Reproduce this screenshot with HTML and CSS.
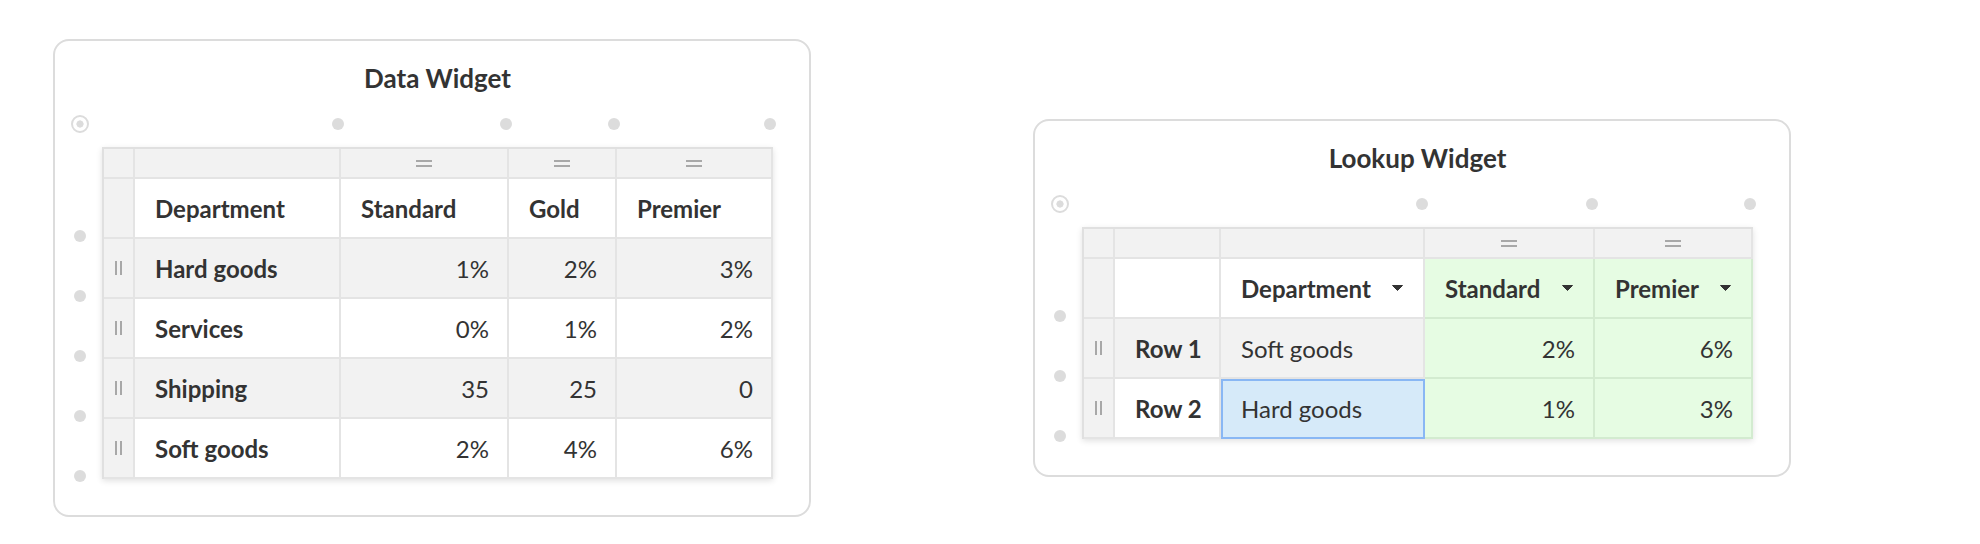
FILE: index.html
```html
<!DOCTYPE html>
<html>
<head>
<meta charset="utf-8">
<title>Widgets</title>
<link rel="stylesheet" href="styles.css">
</head>
<body>
<div class="page">
  <section class="card card-data">
    <h2 class="title">Data Widget</h2>
    <div class="board">
      <div class="corner"><span class="ring"></span></div>
      <div class="col-dots cols-data">
        <div></div>
        <div><span class="dot"></span></div>
        <div><span class="dot"></span></div>
        <div><span class="dot"></span></div>
        <div><span class="dot"></span></div>
      </div>
      <div class="row-dots rows-data">
        <div></div>
        <div><span class="dot"></span></div>
        <div><span class="dot"></span></div>
        <div><span class="dot"></span></div>
        <div><span class="dot"></span></div>
        <div><span class="dot"></span></div>
      </div>
      <div class="table data">
        <div class="c hd"></div>
        <div class="c hd"></div>
        <div class="c hd"><svg class="eq" width="16" height="7" viewBox="0 0 16 7"><path d="M0 1h16M0 6h16" stroke="#a8a8a8" stroke-width="2"/></svg></div>
        <div class="c hd"><svg class="eq" width="16" height="7" viewBox="0 0 16 7"><path d="M0 1h16M0 6h16" stroke="#a8a8a8" stroke-width="2"/></svg></div>
        <div class="c hd"><svg class="eq" width="16" height="7" viewBox="0 0 16 7"><path d="M0 1h16M0 6h16" stroke="#a8a8a8" stroke-width="2"/></svg></div>

        <div class="c handle"></div>
        <div class="c b">Department</div>
        <div class="c b">Standard</div>
        <div class="c b">Gold</div>
        <div class="c b">Premier</div>

        <div class="c handle"><svg width="7" height="14" viewBox="0 0 7 14"><path d="M1 0v14M6 0v14" stroke="#a8a8a8" stroke-width="2"/></svg></div>
        <div class="c b gray">Hard goods</div>
        <div class="c num gray">1%</div>
        <div class="c num gray">2%</div>
        <div class="c num gray">3%</div>

        <div class="c handle"><svg width="7" height="14" viewBox="0 0 7 14"><path d="M1 0v14M6 0v14" stroke="#a8a8a8" stroke-width="2"/></svg></div>
        <div class="c b">Services</div>
        <div class="c num">0%</div>
        <div class="c num">1%</div>
        <div class="c num">2%</div>

        <div class="c handle"><svg width="7" height="14" viewBox="0 0 7 14"><path d="M1 0v14M6 0v14" stroke="#a8a8a8" stroke-width="2"/></svg></div>
        <div class="c b gray">Shipping</div>
        <div class="c num gray">35</div>
        <div class="c num gray">25</div>
        <div class="c num gray">0</div>

        <div class="c handle"><svg width="7" height="14" viewBox="0 0 7 14"><path d="M1 0v14M6 0v14" stroke="#a8a8a8" stroke-width="2"/></svg></div>
        <div class="c b">Soft goods</div>
        <div class="c num">2%</div>
        <div class="c num">4%</div>
        <div class="c num">6%</div>
      </div>
    </div>
  </section>

  <section class="card card-lookup">
    <h2 class="title">Lookup Widget</h2>
    <div class="board">
      <div class="corner"><span class="ring"></span></div>
      <div class="col-dots cols-lookup">
        <div></div>
        <div></div>
        <div><span class="dot"></span></div>
        <div><span class="dot"></span></div>
        <div><span class="dot"></span></div>
      </div>
      <div class="row-dots rows-lookup">
        <div></div>
        <div><span class="dot"></span></div>
        <div><span class="dot"></span></div>
        <div><span class="dot"></span></div>
      </div>
      <div class="table lookup">
        <div class="c hd"></div>
        <div class="c hd"></div>
        <div class="c hd"></div>
        <div class="c hd"><svg class="eq" width="16" height="7" viewBox="0 0 16 7"><path d="M0 1h16M0 6h16" stroke="#a8a8a8" stroke-width="2"/></svg></div>
        <div class="c hd"><svg class="eq" width="16" height="7" viewBox="0 0 16 7"><path d="M0 1h16M0 6h16" stroke="#a8a8a8" stroke-width="2"/></svg></div>

        <div class="c handle"></div>
        <div class="c"></div>
        <div class="c b drop"><span>Department</span><svg width="11" height="6" viewBox="0 0 11 6"><path d="M0.5 0.5h10L5.5 5.5z" fill="#333" stroke="#333" stroke-width="1" stroke-linejoin="round"/></svg></div>
        <div class="c b drop green"><span>Standard</span><svg width="11" height="6" viewBox="0 0 11 6"><path d="M0.5 0.5h10L5.5 5.5z" fill="#333" stroke="#333" stroke-width="1" stroke-linejoin="round"/></svg></div>
        <div class="c b drop green"><span>Premier</span><svg width="11" height="6" viewBox="0 0 11 6"><path d="M0.5 0.5h10L5.5 5.5z" fill="#333" stroke="#333" stroke-width="1" stroke-linejoin="round"/></svg></div>

        <div class="c handle"><svg width="7" height="14" viewBox="0 0 7 14"><path d="M1 0v14M6 0v14" stroke="#a8a8a8" stroke-width="2"/></svg></div>
        <div class="c b gray">Row 1</div>
        <div class="c gray">Soft goods</div>
        <div class="c num green">2%</div>
        <div class="c num green">6%</div>

        <div class="c handle"><svg width="7" height="14" viewBox="0 0 7 14"><path d="M1 0v14M6 0v14" stroke="#a8a8a8" stroke-width="2"/></svg></div>
        <div class="c b">Row 2</div>
        <div class="c sel">Hard goods</div>
        <div class="c num green">1%</div>
        <div class="c num green">3%</div>
      </div>
    </div>
  </section>
</div>
</body>
</html>
```

FILE: styles.css
```css
* {
  box-sizing: border-box;
}

html,
body {
  margin: 0;
  background: #ffffff;
}

body {
  font-family: Lato, "Noto Sans", sans-serif;
  color: #333333;
  width: 1980px;
  height: 544px;
  overflow: hidden;
}

.page {
  display: flex;
  align-items: flex-start;
  padding-left: 53px;
  gap: 222px;
}

.card {
  border: 2px solid #dcdcdc;
  border-radius: 16px;
  padding: 0 36px 36px 0;
  background: #ffffff;
}

.card-data {
  margin-top: 39px;
}

.card-lookup {
  margin-top: 119px;
}

.title {
  margin: 0 0 0 47px;
  height: 74px;
  line-height: 74px;
  text-align: center;
  font-size: 26px;
  font-weight: 700;
}

.board {
  display: grid;
  grid-template-columns: 47px auto;
  grid-template-rows: 32px auto;
}

.corner {
  padding-left: 16px;
}

.ring {
  display: block;
  width: 18px;
  height: 18px;
  border: 2px solid #dcdcdc;
  border-radius: 50%;
  background: radial-gradient(circle, #dcdcdc 0 3.3px, transparent 3.9px);
}

.dot {
  display: block;
  width: 12px;
  height: 12px;
  border-radius: 50%;
  background: #dcdcdc;
}

.col-dots {
  display: grid;
  padding-top: 3px;
}

.col-dots > div {
  display: flex;
  justify-content: flex-end;
  align-items: flex-start;
}

.col-dots .dot {
  margin-right: -3px;
}

.cols-data {
  grid-template-columns: 33px 206px 168px 108px 156px;
}

.cols-lookup {
  grid-template-columns: 33px 106px 204px 170px 158px;
}

.row-dots {
  display: grid;
}

.row-dots > div {
  display: flex;
  align-items: flex-end;
  padding-left: 19px;
}

.row-dots .dot {
  margin-bottom: -3px;
}

.rows-data {
  grid-template-rows: 32px repeat(5, 60px);
}

.rows-lookup {
  grid-template-rows: 32px repeat(3, 60px);
}

.table {
  display: grid;
  width: max-content;
  border-left: 2px solid #e0e0e0;
  border-top: 2px solid #e0e0e0;
  box-shadow: 0 2px 6px rgba(0, 0, 0, 0.12);
}

.data {
  grid-template-columns: 31px 206px 168px 108px 156px;
  grid-template-rows: 30px repeat(5, 60px);
}

.lookup {
  grid-template-columns: 31px 106px 204px 170px 158px;
  grid-template-rows: 30px repeat(3, 60px);
}

.c {
  display: flex;
  align-items: center;
  padding: 0 18px 0 20px;
  border-right: 2px solid #e4e4e4;
  border-bottom: 2px solid #e4e4e4;
  font-size: 24px;
  white-space: nowrap;
  background: #ffffff;
}

.hd {
  background: #f2f2f2;
  justify-content: center;
  padding: 0;
}

.handle {
  background: #f2f2f2;
  justify-content: center;
  padding: 0;
}

.b {
  font-weight: 700;
}

.num {
  justify-content: flex-end;
}

.gray {
  background: #f2f2f2;
}

.drop {
  justify-content: space-between;
  padding-right: 20px;
}

.green {
  background: #e6fce3;
  border-color: #d3ebd0;
}

.sel {
  background: #d6eaf9;
  border-right-color: #89b7f4;
  border-bottom-color: #89b7f4;
  box-shadow: inset 2px 2px 0 #89b7f4;
}
```
